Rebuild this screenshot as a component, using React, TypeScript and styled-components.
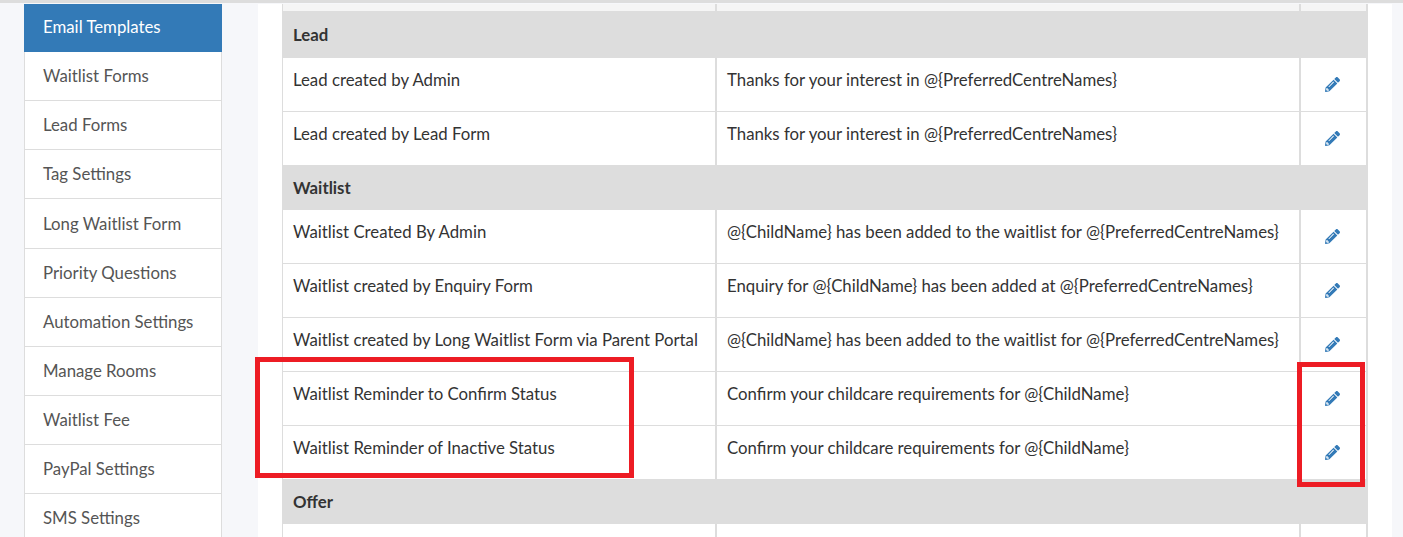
import React from 'react';
import { createGlobalStyle, styled } from 'styled-components';
import { FaPencilAlt } from 'react-icons/fa';

const GlobalStyle = createGlobalStyle`
    html, body {
        margin: 0;
        height: 537px;
        overflow: hidden;
        background: #f6f7fa;
        font-family: Lato, "Open Sans", sans-serif;
    }
`;

const TopLine = styled.div`
    height: 3px;
    background: #dddddd;
    margin-bottom: 1px;
`;

const Page = styled.div`
    position: relative;
    display: flex;
    align-items: flex-start;
    gap: 36px;
    padding-left: 24px;
    height: 533px;
    overflow: hidden;
`;

const Sidebar = styled.nav`
    width: 198px;
    flex: none;
`;

const SideItem = styled.div<{ $active?: boolean }>`
    box-sizing: border-box;
    height: ${p => (p.$active ? '48px' : '49.17px')};
    padding-left: ${p => (p.$active ? 19 : 18)}px;
    padding-bottom: ${p => (p.$active ? 3 : 1)}px;
    display: flex;
    align-items: center;
    font-size: 16.8px;
    color: ${p => (p.$active ? '#ffffff' : '#555555')};
    background: ${p => (p.$active ? '#337ab7' : '#ffffff')};
    border: solid #dddddd;
    border-width: ${p => (p.$active ? '0' : '0 1px 1px 1px')};
`;

const Main = styled.main`
    width: 1134px;
    height: 533px;
    flex: none;
    box-sizing: border-box;
    background: #ffffff;
    padding: 0 24px;
`;

const Table = styled.div`
    width: 1086px;
`;

const HeadStub = styled.div`
    display: grid;
    grid-template-columns: 434px 584px 1fr;
    height: 7px;
    box-sizing: border-box;
    background: #f5f5f5;
    border-left: 1px solid #dddddd;
    border-right: 2px solid #dddddd;
`;

const StubCell = styled.div`
    border-right: 2px solid #dddddd;

    &:last-child {
        border-right: 0;
    }
`;

const GroupRow = styled.div<{ $h: number }>`
    height: ${p => p.$h}px;
    display: flex;
    align-items: center;
    padding-left: 11px;
    box-sizing: border-box;
    background: #dddddd;
    font-size: 16.8px;
    font-weight: 700;
    color: #333333;
`;

const Row = styled.div<{ $last?: boolean }>`
    display: grid;
    grid-template-columns: 434px 584px 1fr;
    height: ${p => (p.$last ? 53 : 54)}px;
    box-sizing: border-box;
    border-left: 1px solid #dddddd;
    border-right: 2px solid #dddddd;
    border-bottom: ${p => (p.$last ? '0' : '1px solid #dddddd')};
`;

const Cell = styled.div`
    box-sizing: border-box;
    padding: 12px 10px 0;
    font-size: 16.8px;
    line-height: 20px;
    color: #333333;
    border-right: 2px solid #dddddd;
    white-space: nowrap;
`;

const ActionCell = styled.div`
    display: flex;
    justify-content: center;
    padding: 19px 2px 0 0;
    box-sizing: border-box;
    color: #337ab7;
    font-size: 15px;
`;

const Callout = styled.div<{ $x: number; $y: number; $w: number; $h: number }>`
    position: absolute;
    left: ${p => p.$x}px;
    top: ${p => p.$y}px;
    width: ${p => p.$w}px;
    height: ${p => p.$h}px;
    box-sizing: border-box;
    border: 5px solid #ed1c24;
    pointer-events: none;
`;

const menu = [
    'Waitlist Forms', 'Lead Forms', 'Tag Settings', 'Long Waitlist Form', 'Priority Questions',
    'Automation Settings', 'Manage Rooms', 'Waitlist Fee', 'PayPal Settings', 'SMS Settings',
];

const groups = [
    {
        title: 'Lead', height: 47, rows: [
            ['Lead created by Admin', 'Thanks for your interest in @{PreferredCentreNames}'],
            ['Lead created by Lead Form', 'Thanks for your interest in @{PreferredCentreNames}'],
        ],
    },
    {
        title: 'Waitlist', height: 45, rows: [
            ['Waitlist Created By Admin', '@{ChildName} has been added to the waitlist for @{PreferredCentreNames}'],
            ['Waitlist created by Enquiry Form', 'Enquiry for @{ChildName} has been added at @{PreferredCentreNames}'],
            ['Waitlist created by Long Waitlist Form via Parent Portal', '@{ChildName} has been added to the waitlist for @{PreferredCentreNames}'],
            ['Waitlist Reminder to Confirm Status', 'Confirm your childcare requirements for @{ChildName}'],
            ['Waitlist Reminder of Inactive Status', 'Confirm your childcare requirements for @{ChildName}'],
        ],
    },
    {
        title: 'Offer', height: 45, rows: [['', '']],
    },
];

export default function App() {
    return (
        <>
            <GlobalStyle />
            <TopLine />
            <Page>
                <Sidebar>
                    <SideItem $active>Email Templates</SideItem>
                    {menu.map(name => <SideItem key={name}>{name}</SideItem>)}
                </Sidebar>
                <Main>
                    <Table>
                        <HeadStub><StubCell /><StubCell /><StubCell /></HeadStub>
                        {groups.map(group => (
                            <React.Fragment key={group.title}>
                                <GroupRow $h={group.height}>{group.title}</GroupRow>
                                {group.rows.map((row, i) => (
                                    <Row key={i} $last={i === group.rows.length - 1}>
                                        <Cell>{row[0]}</Cell>
                                        <Cell>{row[1]}</Cell>
                                        <ActionCell>{row[0] && <FaPencilAlt />}</ActionCell>
                                    </Row>
                                ))}
                            </React.Fragment>
                        ))}
                    </Table>
                </Main>
                <Callout $x={255} $y={353} $w={379} $h={121} />
                <Callout $x={1297} $y={358} $w={68} $h={125} />
            </Page>
        </>
    );
}
